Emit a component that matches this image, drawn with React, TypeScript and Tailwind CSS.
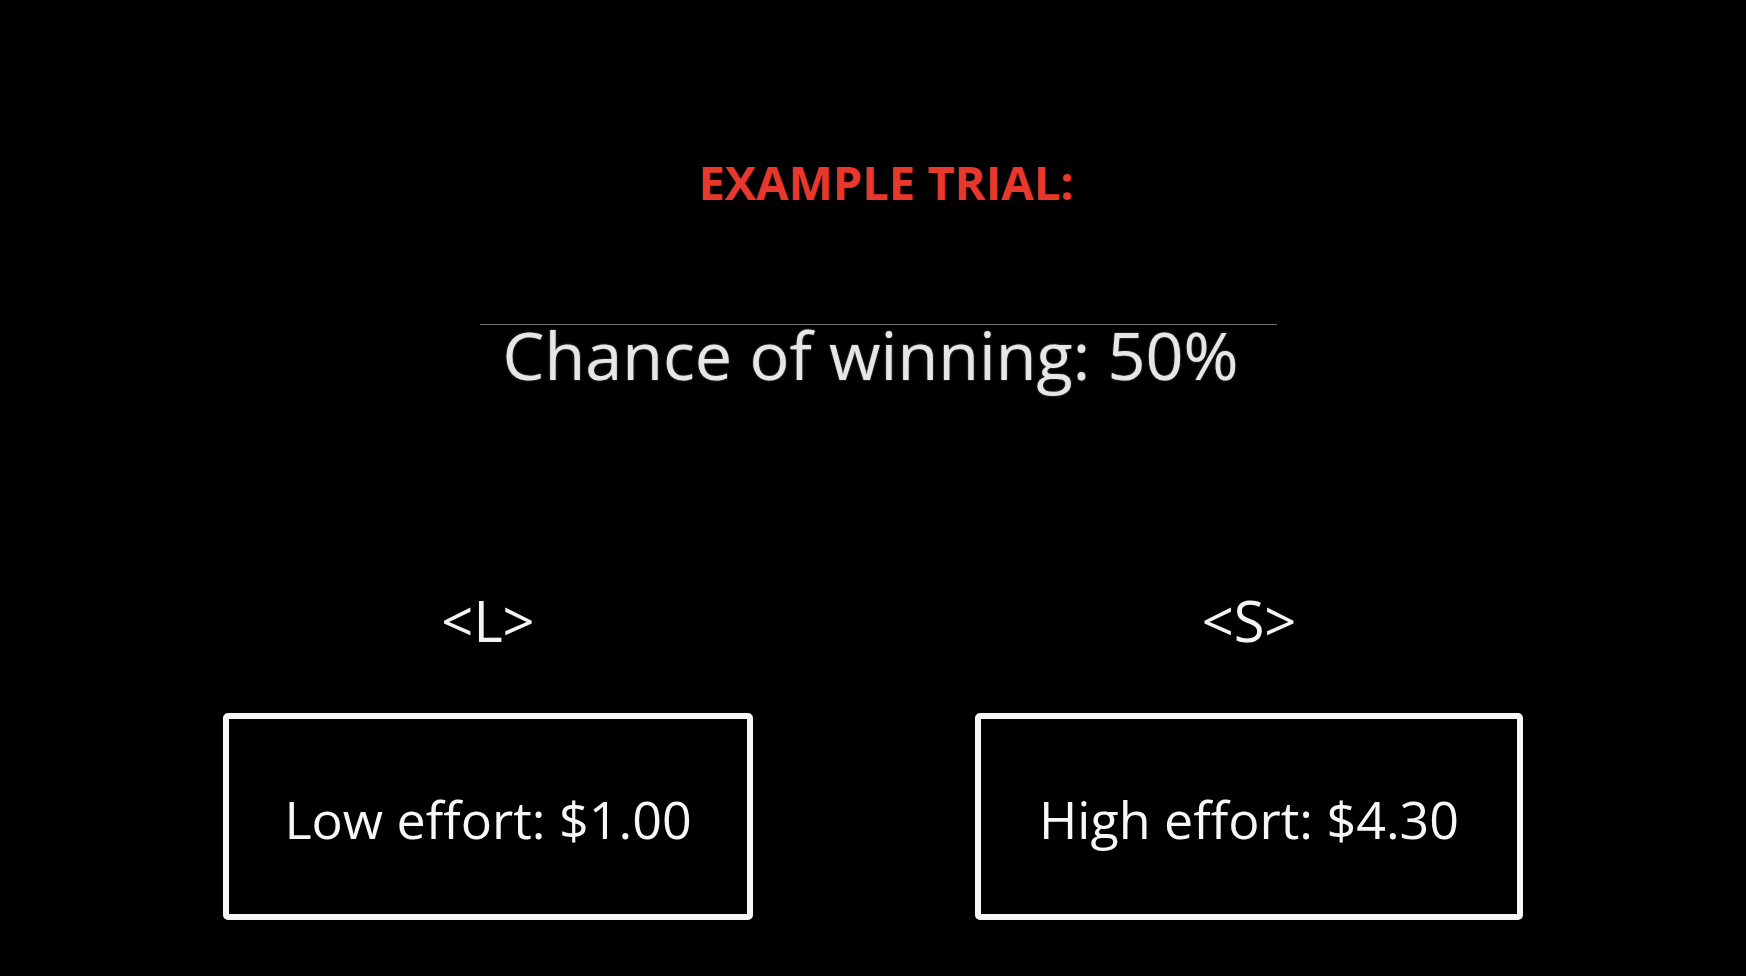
import React from 'react';

const OptionBox: React.FC<{ label: string; text: string; width: string }> = ({ label, text, width }) => {
  return (
    <div className={`flex flex-col items-center ${width}`}>
      <p className="text-[56px] leading-none text-[#f4f4f4]">{label}</p>
      <div className="mt-[65px] flex h-[207px] w-full items-center justify-center rounded-[5px] border-[6px] border-[#f7f7f7]">
        <p className="pt-[4px] text-[52px] leading-none text-[#f7f7f7]">{text}</p>
      </div>
    </div>
  );
};

const App: React.FC = () => {
  return (
    <div className="h-[976px] w-full overflow-hidden bg-black font-['Open_Sans',sans-serif]">
      <div className="flex flex-col pt-[159px]">
        {/* Title */}
        <h1 className="pl-[26px] text-center text-[47px] font-bold leading-none text-[#e8382b]">
          EXAMPLE TRIAL:
        </h1>

        {/* Probability line */}
        <div className="ml-[480px] mt-[118px] w-[797px] border-t border-[#6f6f6f]">
          <p className="pr-[16px] text-center text-[66.5px] leading-[58px] text-[#e6e6e6] [text-shadow:0_0_2px_rgba(255,255,255,0.45)]">
            Chance of winning: 50%
          </p>
        </div>

        {/* Choices */}
        <div className="mt-[209px] flex gap-[222px] pl-[223px]">
          <OptionBox label="<L>" text="Low effort: $1.00" width="w-[530px]" />
          <OptionBox label="<S>" text="High effort: $4.30" width="w-[548px]" />
        </div>
      </div>
    </div>
  );
};

export default App;
